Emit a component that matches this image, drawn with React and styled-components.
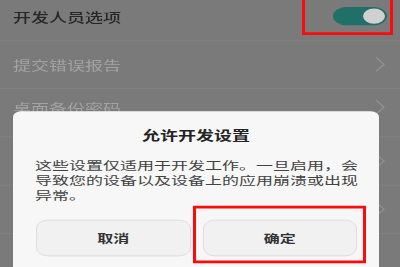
import React from 'react';
import styled, { createGlobalStyle } from 'styled-components';

// the screenshot is squashed vertically, so the page is laid out tall and squeezed
const SQUASH = 0.7;

const GlobalStyle = createGlobalStyle`
  html, body {
    margin: 0;
    padding: 0;
    background: #7a7a7a;
  }
  body {
    font-family: "Noto Sans CJK SC", "Noto Sans", sans-serif;
  }
`;

const Viewport = styled.div`
  width: 400px;
  height: 267px;
  overflow: hidden;
  background: #7a7a7a;
`;

const Stage = styled.div`
  position: relative;
  display: flow-root;
  width: 400px;
  height: ${267 / SQUASH}px;
  transform: scaleY(${SQUASH});
  transform-origin: top left;
`;

const List = styled.div`
  display: flex;
  flex-direction: column;
  margin-top: -11px;
`;

const Row = styled.div`
  display: flex;
  align-items: ${p => (p.top ? 'flex-start' : 'center')};
  justify-content: ${p => (p.end ? 'flex-end' : 'space-between')};
  min-height: 69px;
  padding: ${p => (p.top ? '14px 15px 0 13px' : '0 15px 0 13px')};
  box-sizing: border-box;
  border-bottom: 1px solid #838383;
`;

const Label = styled.span`
  font-size: 18px;
  line-height: 24px;
  font-weight: ${p => (p.strong ? 500 : 400)};
  color: ${p => (p.strong ? '#272727' : '#a3a3a3')};
`;

const Switch = styled.div`
  display: flex;
  align-items: center;
  justify-content: flex-end;
  width: 54px;
  height: 26px;
  padding: 0 2px;
  box-sizing: border-box;
  border-radius: 13px;
  background: #1e7068;
  margin-right: -2px;
`;

const Knob = styled.div`
  width: 22px;
  height: 22px;
  border-radius: 50%;
  background: #d0d0d0;
`;

const Chevron = () => (
  <svg width="10" height="24" viewBox="0 0 10 24">
    <polyline points="1,2 9,12 1,22" fill="none" stroke="#929292" strokeWidth="1.4" />
  </svg>
);

const Highlight = styled.div`
  position: absolute;
  left: ${p => p.x}px;
  top: ${p => p.y}px;
  width: ${p => p.w}px;
  height: ${p => p.h}px;
  box-sizing: border-box;
  border-style: solid;
  border-color: #ff0a0a;
  border-width: 4px 3px;
  pointer-events: none;
`;

const Dialog = styled.div`
  position: absolute;
  left: 13px;
  top: 159px;
  width: 366px;
  height: 260px;
  box-sizing: border-box;
  padding: 21px 22px 0 22px;
  background: #f7f7f7;
  border-radius: 8px;
  display: flex;
  flex-direction: column;
`;

const Title = styled.div`
  text-align: center;
  font-size: 18px;
  line-height: 24px;
  font-weight: 700;
  color: #232323;
`;

const Body = styled.p`
  margin: 21px 0 0 0;
  width: 326px;
  font-size: 17px;
  line-height: 21.4px;
  color: #424242;
`;

const Buttons = styled.div`
  display: grid;
  grid-template-columns: 1fr 1fr;
  gap: 12px;
  margin: 25px 0 0 1px;
`;

const Button = styled.div`
  display: flex;
  align-items: center;
  justify-content: center;
  height: 52px;
  box-sizing: border-box;
  border: 1px solid #d9d9d9;
  border-radius: 12px;
  background: #f1f1f1;
  font-size: 16px;
  font-weight: 700;
  color: #333;
`;

export default function App() {
  return (
    <>
      <GlobalStyle />
      <Viewport>
        <Stage>
          <List>
            <Row>
              <Label strong>开发人员选项</Label>
              <Switch><Knob /></Switch>
            </Row>
            <Row>
              <Label>提交错误报告</Label>
              <Chevron />
            </Row>
            <Row top>
              <Label>桌面备份密码</Label>
              <Chevron />
            </Row>
            {/* rows hidden behind the dialog, only their chevrons show */}
            <Row end><Chevron /></Row>
            <Row end><Chevron /></Row>
          </List>

          <Highlight x={302} y={-10} w={91} h={60} />

          <Dialog>
            <Title>允许开发设置</Title>
            <Body>这些设置仅适用于开发工作。一旦启用，会导致您的设备以及设备上的应用崩溃或出现异常。</Body>
            <Buttons>
              <Button>取消</Button>
              <Button>确定</Button>
            </Buttons>
            <Highlight x={180} y={135} w={173} h={82} />
          </Dialog>
        </Stage>
      </Viewport>
    </>
  );
}
